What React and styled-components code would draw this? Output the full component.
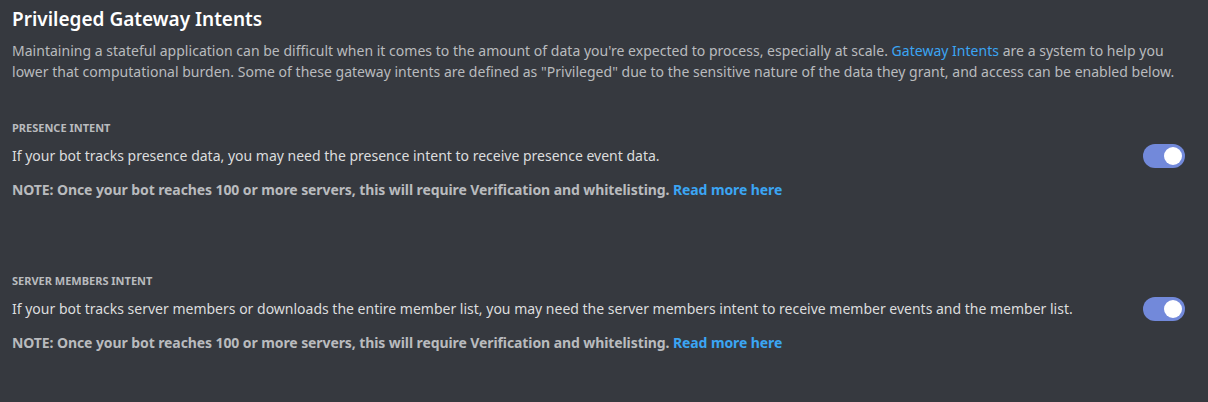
import React, { useState } from 'react'
import styled, { createGlobalStyle } from 'styled-components'

const GlobalStyle = createGlobalStyle`
  html, body {
    margin: 0;
    padding: 0;
    background-color: #36393f;
  }
  body {
    font-family: "Noto Sans", "Open Sans", sans-serif;
  }
`

const Page = styled.div`
  width: 1208px;
  height: 402px;
  box-sizing: border-box;
  padding: 6px 12px 0 12px;
  background-color: #36393f;
  overflow: hidden;
`

const Title = styled.h2`
  margin: 0;
  font-size: 19px;
  line-height: 26px;
  font-weight: 600;
  color: #ffffff;
`

const Desc = styled.p`
  margin: 8px 0 0 0;
  font-size: 14px;
  line-height: 21px;
  letter-spacing: 0.02px;
  color: #b9bbbe;
`

const Link = styled.a`
  color: #3ba5f3;
  text-decoration: none;
  cursor: pointer;
`

const Section = styled.section`
  margin-top: ${p => p.$first ? '38px' : '73px'};
`

const Label = styled.h5`
  margin: 0;
  font-size: 11px;
  line-height: 16px;
  font-weight: 700;
  text-transform: uppercase;
  color: #b9bbbe;
`

const Row = styled.div`
  display: flex;
  align-items: center;
  justify-content: space-between;
  margin-top: 8px;
  padding-right: 11px;
`

const Text = styled.p`
  margin: 0;
  font-size: 14px;
  line-height: 20px;
  color: #dcddde;
`

const Note = styled.p`
  margin: 12px 0 0 0;
  font-size: 14px;
  line-height: 20px;
  font-weight: 700;
  letter-spacing: -0.09px;
  color: #b9bbbe;
`

const Track = styled.button`
  position: relative;
  flex: none;
  width: 42px;
  height: 24px;
  padding: 0;
  border: none;
  border-radius: 12px;
  background-color: ${p => p.$on ? '#7289da' : '#72767d'};
  cursor: pointer;
`

const Knob = styled.span`
  position: absolute;
  top: 3px;
  left: ${p => p.$on ? '21px' : '3px'};
  width: 18px;
  height: 18px;
  border-radius: 50%;
  background-color: #ffffff;
  transition: left 0.15s;
`

function Toggle() {
  const [on, setOn] = useState(true)
  return (
    <Track $on={on} onClick={() => setOn(!on)}>
      <Knob $on={on} />
    </Track>
  )
}

function Intent({ label, text, first }) {
  return (
    <Section $first={first}>
      <Label>{label}</Label>
      <Row>
        <Text>{text}</Text>
        <Toggle />
      </Row>
      <Note>
        NOTE: Once your bot reaches 100 or more servers, this will require Verification and whitelisting.{' '}
        <Link>Read more here</Link>
      </Note>
    </Section>
  )
}

export default function App() {
  return (
    <Page>
      <GlobalStyle />
      <Title>Privileged Gateway Intents</Title>
      <Desc>
        Maintaining a stateful application can be difficult when it comes to the amount of data you're expected to process, especially at scale.{' '}
        <Link>Gateway Intents</Link> are a system to help you lower that computational burden. Some of these gateway intents are defined as "Privileged" due to the sensitive nature of the data they grant, and access can be enabled below.
      </Desc>
      <Intent
        first
        label="Presence Intent"
        text="If your bot tracks presence data, you may need the presence intent to receive presence event data."
      />
      <Intent
        label="Server Members Intent"
        text="If your bot tracks server members or downloads the entire member list, you may need the server members intent to receive member events and the member list."
      />
    </Page>
  )
}
